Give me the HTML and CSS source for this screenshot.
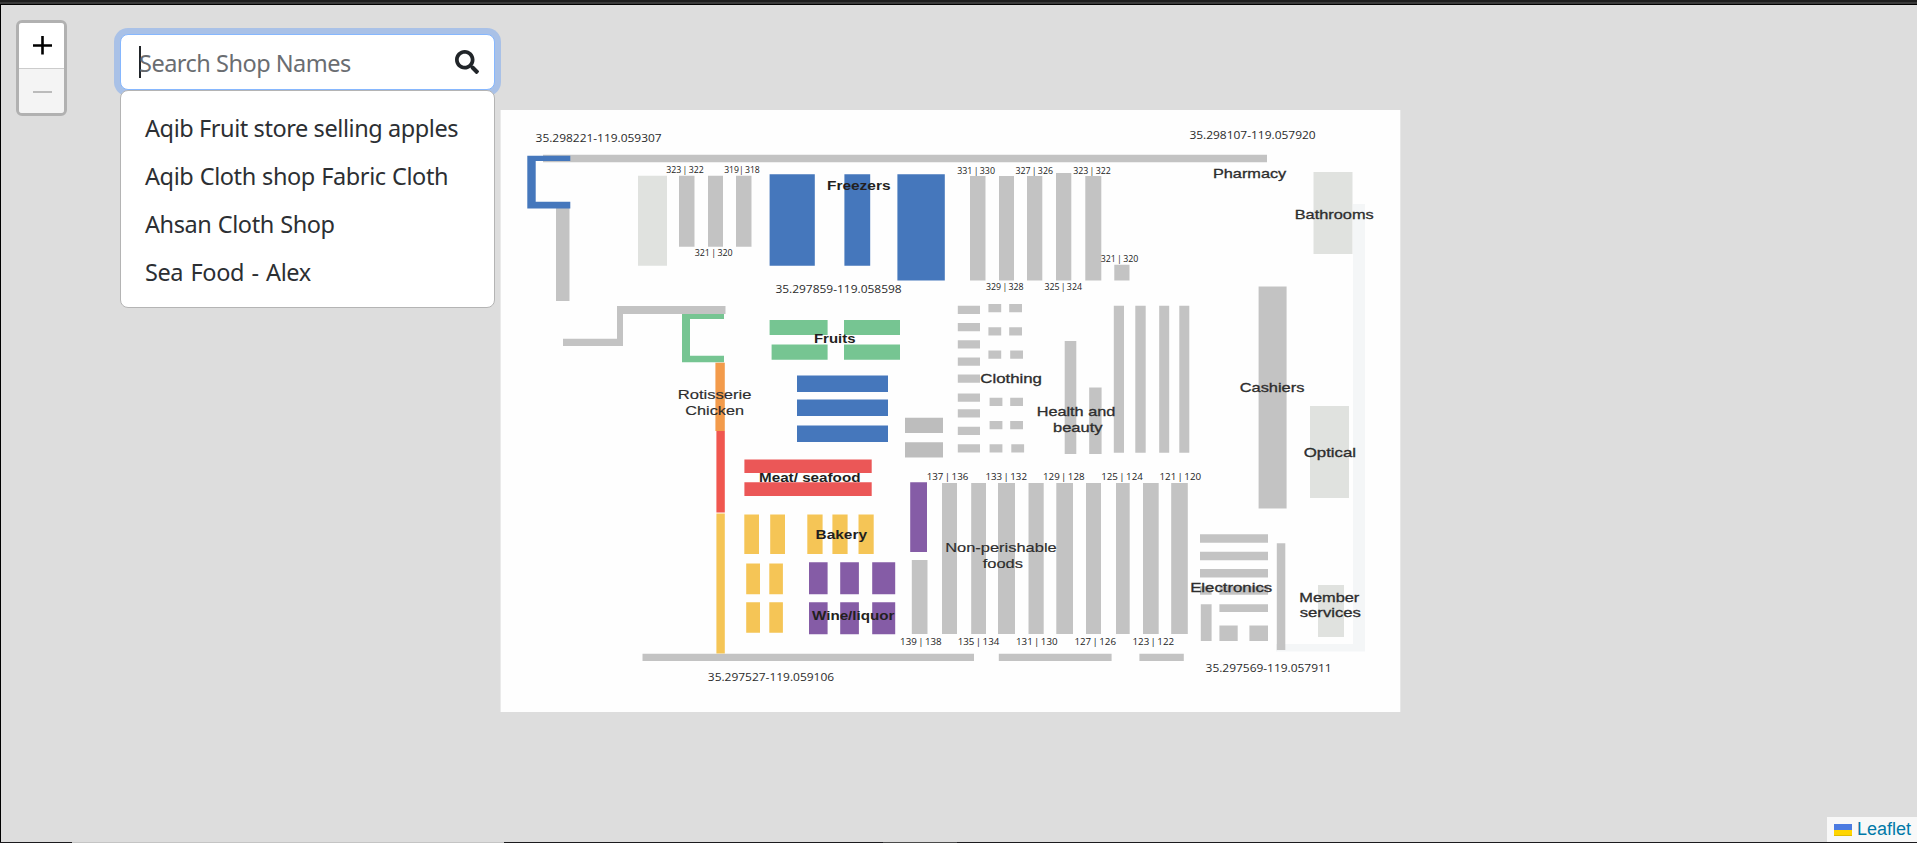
FILE: index.html
```html
<!DOCTYPE html>
<html lang="en">
<head>
<meta charset="utf-8">
<title>Shop Map</title>
<link rel="stylesheet" href="styles.css">
</head>
<body>
<div class="window-edge"></div>
<main class="map">
  <svg class="floor-plan" viewBox="500 110 901 602" role="img" aria-label="Store floor plan">
    <rect class="sheet" x="500.6" y="110" width="899.7" height="602"/>
    <path class="pale" d="M1353 204h12v447.500h-89V644h77z"/>
    <g class="light">
      <path d="M638 175.7h29v90h-29zM1313.5 172h39v82h-39zM1310 406h39v92h-39zM1318 585h26v52h-26z"/>
    </g>
    <g class="gray">
      <path d="M543 154.7h724v7.6H543zM556 208h13.5v93H556zM617 306h108.5v8H623v32h-60v-7.3h54z"/>
      <path d="M679 175.7h15.5v71H679zM708 175.7h15v71h-15zM736 175.7h15.5v71H736z"/>
      <path d="M970 176h15.5v104.5H970zM999 176h15v104.5h-15zM1027 176h15.3v104.5H1027zM1056 173h15.3v107.5H1056zM1085.3 176h16v104.5h-16zM1114.3 264.7h15.2v15.8h-15.2z"/>
      <path class="dim" d="M905 417.7h38v15.3h-38zM905 442.3h38v15.3h-38z"/>
      <path d="M957.8 305.7H980v8.3h-22.2zM957.8 323H980v8.3h-22.2zM957.8 340.3H980v8.3h-22.2zM957.8 357.4H980v8.3h-22.2zM957.8 374.5H980v8.3h-22.2zM957.8 393.5H980v8.3h-22.2zM957.8 409.3H980v8.3h-22.2zM957.8 426.7H980v8.3h-22.2zM957.8 444.2H980v8.3h-22.2z"/>
      <path d="M988.4 304h12.8v8.3h-12.8zM1009.2 304h12.8v8.3h-12.8zM988.4 327.2h12.8v8.3h-12.8zM1009.2 327.2h12.8v8.3h-12.8zM988.4 350.5h12.8v8.3h-12.8zM1010.2 350.5h12.8v8.3h-12.8z"/>
      <path d="M989.6 397.7h12.8v8.3h-12.8zM1010.2 397.7h12.8v8.3h-12.8zM989.6 421h12.8v8.3h-12.8zM1010.2 421h12.8v8.3h-12.8zM989.6 444.2h12.8v8.3h-12.8zM1011.3 444.2h12.8v8.3h-12.8z"/>
      <path d="M1064.7 341h11.6v113h-11.6zM1089.2 387.5h12.4V454h-12.4zM1113.8 305.7h10.2v147h-10.2zM1135.3 305.7h10.4v147h-10.4zM1159.2 305.7h10v147h-10zM1179.3 305.7h10v147h-10z"/>
      <path d="M911.8 560h15.7v74h-15.7zM942 483h15v151h-15zM971.2 483h14.8v151h-14.8zM998 483h17v151h-17zM1028.5 483h15.2v151h-15.2zM1056.3 483h16.7v151h-16.7zM1086 483h15v151h-15zM1116 483h13.7v151H1116zM1143 483h15.7v151H1143zM1171.2 483h16.6v151h-16.6z"/>
      <path d="M642.5 653.7H974v7.4H642.5zM998.8 653.7h112.8v7.4H998.8zM1139.4 653.7h44.4v7.4h-44.4z"/>
      <path d="M1258.6 286.4h28v222h-28zM1276.8 543.2h8.5V650h-8.5z"/>
      <path d="M1200 534.2h68v8.5h-68zM1200 551.8h68v8.4h-68zM1200 569h68v8.6h-68zM1200 586.3h11.6v8.4H1200zM1219.4 586.3H1268v8.4h-48.6zM1219.4 604.2H1268v7.8h-48.6zM1200.8 604.2h10.8V641h-10.8zM1219.4 625.5h18.3V641h-18.3zM1249.4 625.5H1268V641h-18.6z"/>
    </g>
    <g class="blue">
      <path d="M527.3 155.7h43v5.3h-34.6v40.7h34.6v6.9h-43z"/>
      <path d="M769.6 174.3h45.2v91.5h-45.2zM844.4 174.3h25.8v91.5h-25.8zM897.4 174.3h47.4v106.2h-47.4zM797 375.5h91V392h-91zM797 399.5h91V416h-91zM797 425.5h91V442h-91z"/>
    </g>
    <g class="green">
      <path d="M682 314h42v5h-34v36.7h34v6.5h-42zM769.6 320h58v15h-58zM844 320h56v15h-56zM771.6 344.4h56v15.3h-56zM844 344.4h56v15.3h-56z"/>
    </g>
    <path class="orange" d="M715.4 362.7h9.4V431h-9.4z"/>
    <path class="tomato" d="M716.4 431h8.4v81.5h-8.4z"/>
    <path class="red" d="M744.4 459.4h127.3V473H744.4zM744.4 482.2h127.3v13.7H744.4z"/>
    <path class="yellow" d="M716.4 513.5h8.4v140h-8.4zM744.3 514.4H759V554h-14.7zM770.2 514.4H785V554h-14.8zM807.3 514.4h15.3V554h-15.3zM832.4 514.4h15.2V554h-15.2zM858.5 514.4h15.2V554h-15.2zM746.2 563.6h13.8v30.6h-13.8zM769.3 563.6h13.6v30.6h-13.6zM746.2 602.2h13.8v30.5h-13.8zM769.3 602.2h13.6v30.5h-13.6z"/>
    <path class="purple" d="M910.2 482.3H927V552h-16.8zM809 562.2h18.6v32H809zM840.2 562.2h18.7v32h-18.7zM872.2 562.2h23v32h-23zM809 602.2h18.6v32H809zM840.2 602.2h18.7v32h-18.7zM872.2 602.2h23v32h-23z"/>

    <g class="coordinate">
      <text x="535.6" y="142" textLength="126" lengthAdjust="spacingAndGlyphs">35.298221-119.059307</text>
      <text x="1189.4" y="139" textLength="126.300" lengthAdjust="spacingAndGlyphs">35.298107-119.057920</text>
      <text x="775.4" y="293" textLength="126.300" lengthAdjust="spacingAndGlyphs">35.297859-119.058598</text>
      <text x="707.8" y="681" textLength="126.300" lengthAdjust="spacingAndGlyphs">35.297527-119.059106</text>
      <text x="1205.600" y="672" textLength="126" lengthAdjust="spacingAndGlyphs">35.297569-119.057911</text>
    </g>
    <g class="aisle">
      <text x="666.2" y="173.3" textLength="37.6" lengthAdjust="spacingAndGlyphs">323 | 322</text>
      <text x="724.2" y="173.3" textLength="35.6" lengthAdjust="spacingAndGlyphs">319| 318</text>
      <text x="694.7" y="256.3" textLength="38" lengthAdjust="spacingAndGlyphs">321 | 320</text>
      <text x="957.2" y="173.5" textLength="37.8" lengthAdjust="spacingAndGlyphs">331 | 330</text>
      <text x="1015.4" y="173.5" textLength="37.6" lengthAdjust="spacingAndGlyphs">327 | 326</text>
      <text x="1073.2" y="173.5" textLength="37.6" lengthAdjust="spacingAndGlyphs">323 | 322</text>
      <text x="986" y="290" textLength="37.6" lengthAdjust="spacingAndGlyphs">329 | 328</text>
      <text x="1044.4" y="290" textLength="37.6" lengthAdjust="spacingAndGlyphs">325 | 324</text>
      <text x="1100.7" y="262.3" textLength="37.6" lengthAdjust="spacingAndGlyphs">321 | 320</text>
      <text x="926.7" y="480" textLength="41.6" lengthAdjust="spacingAndGlyphs">137 | 136</text>
      <text x="985.4" y="480" textLength="41.6" lengthAdjust="spacingAndGlyphs">133 | 132</text>
      <text x="1043" y="480" textLength="41.6" lengthAdjust="spacingAndGlyphs">129 | 128</text>
      <text x="1101.2" y="480" textLength="41.6" lengthAdjust="spacingAndGlyphs">125 | 124</text>
      <text x="1159.5" y="480" textLength="41.6" lengthAdjust="spacingAndGlyphs">121 | 120</text>
      <text x="900.1" y="645.2" textLength="41.6" lengthAdjust="spacingAndGlyphs">139 | 138</text>
      <text x="957.7" y="645.2" textLength="41.6" lengthAdjust="spacingAndGlyphs">135 | 134</text>
      <text x="1016" y="645.2" textLength="41.6" lengthAdjust="spacingAndGlyphs">131 | 130</text>
      <text x="1074.4" y="645.2" textLength="41.6" lengthAdjust="spacingAndGlyphs">127 | 126</text>
      <text x="1132.5" y="645.2" textLength="41.6" lengthAdjust="spacingAndGlyphs">123 | 122</text>
    </g>
    <g class="zone zone-strong">
      <text x="827" y="190" textLength="63.5" lengthAdjust="spacingAndGlyphs">Freezers</text>
      <text x="814" y="342.5" textLength="41.5" lengthAdjust="spacingAndGlyphs">Fruits</text>
      <text x="759" y="481.7" textLength="101.5" lengthAdjust="spacingAndGlyphs">Meat/ seafood</text>
      <text x="815.5" y="538.5" textLength="51.5" lengthAdjust="spacingAndGlyphs">Bakery</text>
      <text x="812" y="620" textLength="82.5" lengthAdjust="spacingAndGlyphs">Wine/liquor</text>
    </g>
    <g class="zone">
      <text x="677.7" y="399.2" textLength="73.8" lengthAdjust="spacingAndGlyphs">Rotisserie</text>
      <text x="685.3" y="414.7" textLength="58.7" lengthAdjust="spacingAndGlyphs">Chicken</text>
      <text x="945.2" y="552" textLength="111.5" lengthAdjust="spacingAndGlyphs">Non-perishable</text>
      <text x="982.7" y="567.5" textLength="40.3" lengthAdjust="spacingAndGlyphs">foods</text>
    </g>
    <g class="zone zone-medium">
      <text x="980.3" y="382.5" textLength="61.6" lengthAdjust="spacingAndGlyphs">Clothing</text>
      <text x="1036.7" y="416" textLength="78.6" lengthAdjust="spacingAndGlyphs">Health and</text>
      <text x="1053" y="431.5" textLength="49.5" lengthAdjust="spacingAndGlyphs">beauty</text>
      <text x="1212.9" y="178" textLength="73.4" lengthAdjust="spacingAndGlyphs">Pharmacy</text>
      <text x="1294.7" y="219.3" textLength="79" lengthAdjust="spacingAndGlyphs">Bathrooms</text>
      <text x="1239.7" y="392.3" textLength="64.7" lengthAdjust="spacingAndGlyphs">Cashiers</text>
      <text x="1303.7" y="457" textLength="52.4" lengthAdjust="spacingAndGlyphs">Optical</text>
      <text x="1190.2" y="592.3" textLength="82" lengthAdjust="spacingAndGlyphs">Electronics</text>
      <text x="1299.3" y="601.7" textLength="60" lengthAdjust="spacingAndGlyphs">Member</text>
      <text x="1299.7" y="617.2" textLength="61.3" lengthAdjust="spacingAndGlyphs">services</text>
    </g>
  </svg>

  <div class="controls">
    <div class="zoom">
      <button class="zoom-button" aria-label="Zoom in"><svg viewBox="0 0 19 19"><path d="M0 9.500h19M9.500 0v18.500"/></svg></button>
      <button class="zoom-button zoom-disabled" aria-label="Zoom out"><svg viewBox="0 0 19 19"><path d="M0 10h19"/></svg></button>
    </div>
    <div class="search">
      <div class="search-field">
        <span class="caret"></span>
        <span class="placeholder">Search Shop Names</span>
        <svg class="search-icon" viewBox="0 0 512 512"><path d="M505 442.7L405.3 343c-4.5-4.5-10.600-7-17-7H372c27.600-35.300 44-79.700 44-128C416 93.100 322.900 0 208 0S0 93.100 0 208s93.100 208 208 208c48.300 0 92.700-16.400 128-44v16.300c0 6.400 2.500 12.500 7 17l99.700 99.700c9.400 9.400 24.600 9.400 33.900 0l28.300-28.300c9.400-9.400 9.400-24.600.1-34zM208 336c-70.700 0-128-57.200-128-128 0-70.700 57.200-128 128-128 70.700 0 128 57.200 128 128 0 70.700-57.200 128-128 128z"/></svg>
      </div>
      <ul class="results">
        <li>Aqib Fruit store selling apples</li>
        <li class="spaced">Aqib Cloth shop Fabric Cloth</li>
        <li class="spaced">Ahsan Cloth Shop</li>
        <li class="spaced-wide">Sea Food - Alex</li>
      </ul>
    </div>
  </div>

  <div class="attribution">
    <svg class="flag" viewBox="0 0 18 12"><path fill="#4c7be1" d="M0 0h18v6H0z"/><path fill="#ffd500" d="M0 6h18v5H0z"/><path fill="#e0bc00" d="M0 11h18v1H0z"/></svg>
    <span>Leaflet</span>
  </div>
</main>
<footer class="taskbar"><span class="task task-wide"></span><span class="task task-small"></span></footer>
</body>
</html>
```

FILE: styles.css
```css
* {
  box-sizing: border-box;
}

body {
  margin: 0;
  height: 843px;
  display: flex;
  flex-direction: column;
  overflow: hidden;
  background: #dddddd;
  font-family: "Noto Sans", "Open Sans", sans-serif;
}

.window-edge {
  height: 5px;
  flex: none;
  background: linear-gradient(#1e1e1e 0 2px, #3a3a3a 2px 4px, #000 4px);
}

.map {
  position: relative;
  flex: 1;
  border-left: 1px solid #000;
  background: #dddddd;
}

.floor-plan {
  position: absolute;
  left: 499px;
  top: 105px;
  width: 901px;
  height: 602px;
}

.sheet { fill: #fefefe; }
.pale { fill: #f4f6f7; }
.light { fill: #e0e2df; }
.gray { fill: #c3c3c3; }
.dim { fill: #bdbdbd; }
.blue { fill: #4577bc; }
.green { fill: #76c592; }
.orange { fill: #f39b4b; }
.tomato { fill: #f0574f; }
.red { fill: #eb5757; }
.yellow { fill: #f5c556; }
.purple { fill: #855ca6; }

.coordinate {
  font: 11.3px "Open Sans", sans-serif;
  fill: #2b2b2b;
}

.aisle {
  font: 8.6px "Open Sans", sans-serif;
  word-spacing: -1px;
  fill: #222;
}

.zone {
  font: 13px "Liberation Sans", Arial, sans-serif;
  fill: #2d2d2d;
  stroke: #2d2d2d;
  stroke-width: 0.15px;
}

.zone-medium {
  stroke-width: 0.3px;
}

.zone-strong {
  font-weight: bold;
  fill: #231f20;
  stroke: none;
}

.controls {
  position: relative;
  display: flex;
  align-items: flex-start;
  gap: 53px;
  padding: 15px 0 0 15px;
}

.zoom {
  width: 51px;
  height: 96px;
  display: flex;
  flex-direction: column;
  border: 3px solid #b1b1b1;
  border-radius: 6px;
  overflow: hidden;
}

.zoom-button {
  flex: 1;
  display: flex;
  align-items: center;
  justify-content: center;
  padding: 1px 0 0 2px;
  border: 0;
  background: #fff;
}

.zoom-button svg {
  width: 19px;
  height: 19px;
  fill: none;
  stroke: #000;
  stroke-width: 2.6;
}

.zoom-disabled {
  border-top: 1px solid #ccc;
  background: #f4f4f4;
}

.zoom-disabled svg {
  stroke: #bbb;
  stroke-width: 2;
}

.search {
  width: 375px;
  padding-top: 14px;
}

.search-field {
  display: flex;
  align-items: center;
  height: 56px;
  padding: 0 15px 0 18px;
  border: 1px solid #86b7fe;
  border-radius: 8px;
  background: #fff;
  box-shadow: 0 0 0 6px #a9c1e7;
}

.caret {
  width: 2px;
  height: 32px;
  margin-right: -2px;
  background: #212529;
}

.placeholder {
  flex: 1;
  font-size: 23.5px;
  letter-spacing: -0.5px;
  line-height: 32px;
  padding-top: 1px;
  color: #6a6d71;
}

.search-icon {
  width: 24px;
  height: 24px;
  fill: #212529;
}

.results {
  position: relative;
  height: 218px;
  margin: 0;
  padding: 13px 24px 10px;
  list-style: none;
  border: 1px solid #b4b4b4;
  border-radius: 8px;
  background: #fff;
  color: #2c2f33;
  font-size: 23.5px;
  letter-spacing: -0.42px;
  line-height: 48px;
  white-space: nowrap;
}

.spaced {
  word-spacing: 0.7px;
}

.spaced-wide {
  word-spacing: 1.8px;
}

.attribution {
  position: absolute;
  right: 0;
  bottom: 0;
  width: 90px;
  height: 25px;
  display: flex;
  align-items: center;
  gap: 5px;
  padding-left: 7px;
  background: #f8f8f8;
  color: #0078a8;
  font: 18px/25px "Liberation Sans", Arial, sans-serif;
}

.flag {
  width: 18px;
  height: 12px;
}

.taskbar {
  flex: none;
  height: 1px;
  display: flex;
  gap: 379px;
  padding-left: 72px;
  background: #1b1a1d;
}

.task-wide {
  width: 432px;
  background: #c4c4c4;
}

.task-small {
  width: 74px;
  background: #4a4a4a;
}
```
